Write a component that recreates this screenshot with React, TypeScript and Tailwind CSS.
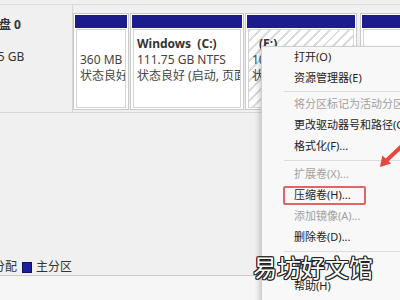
import React from "react";

const font = "font-['Noto_Sans','Noto_Sans_CJK_SC',sans-serif]";

type Item = { label: string; disabled?: boolean; sep?: number; boxed?: boolean };

const items: Item[] = [
  { label: "打开(O)" },
  { label: "资源管理器(E)" },
  { label: "", sep: 5 },
  { label: "将分区标记为活动分区(M)", disabled: true },
  { label: "更改驱动器号和路径(C)..." },
  { label: "格式化(F)..." },
  { label: "", sep: 7 },
  { label: "扩展卷(X)...", disabled: true },
  { label: "压缩卷(H)...", boxed: true },
  { label: "添加镜像(A)...", disabled: true },
  { label: "删除卷(D)..." },
  { label: "", sep: 7 },
  { label: "属性(P)" },
  { label: "帮助(H)" },
];

function Partition({
  width,
  hatched,
  lines,
}: {
  width: string;
  hatched?: boolean;
  lines: React.ReactNode[];
}) {
  return (
    <div className={`${width} shrink-0 h-[97px] flex flex-col bg-white border border-[#c9c9c9] p-[1px]`}>
      <div className="h-[13px] bg-[#1c1c8c] shrink-0" />
      <div
        className={`flex-1 mt-[1px] mx-[1px] border border-[#d4d4d4] overflow-hidden px-[3px] pt-[6px] text-[12px] leading-[16px] text-[#444] whitespace-nowrap ${
          hatched
            ? "bg-[repeating-linear-gradient(135deg,#dcdcdc_0px,#dcdcdc_2px,#ffffff_2px,#ffffff_7px)]"
            : "bg-white"
        }`}
      >
        {lines.map((l, i) => (
          <div key={i} className="h-[16px]">
            {l}
          </div>
        ))}
      </div>
    </div>
  );
}

export default function App() {
  return (
    <div className={`relative w-[400px] h-[300px] overflow-hidden bg-[#f0f0f0] ${font}`}>
      <div className="flex flex-col h-full">
        <div className="h-[5px] shrink-0 border-b border-[#dadada]" />
        {/* disk row */}
        <div className="h-[108px] shrink-0 flex border-b border-[#d6d6d6]">
          <div className="w-[73px] shrink-0 border-r border-[#d6d6d6] pt-[12px] text-[12px] text-[#333] whitespace-nowrap">
            <div className="ml-[-13px] font-bold leading-[16px]">磁盘 0</div>
            <div className="ml-[-33px] mt-[16px] leading-[16px]">232.75 GB</div>
          </div>
          <div className="flex-1 flex pt-[8px] gap-[1px] overflow-hidden">
            <Partition width="w-[56px]" lines={["", "360 MB", "状态良好"]} />
            <Partition
              width="w-[114px]"
              lines={[
                <span className="font-bold text-[#333]">Windows&nbsp;&nbsp;(C:)</span>,
                "111.75 GB NTFS",
                "状态良好 (启动, 页面文件, 故障转储)",
              ]}
            />
            <Partition
              width="w-[112px]"
              hatched
              lines={[
                <span className="pl-[7px] font-bold text-[#333]">(E:)</span>,
                "100.00 GB NTFS",
                "状态良好 (主分区)",
              ]}
            />
            <div className="w-[1px] shrink-0" />
            <Partition width="w-[60px]" lines={["", "", ""]} />
          </div>
        </div>
        <div className="h-[146px] shrink-0" />
        {/* legend */}
        <div className="h-[17px] shrink-0 flex items-center border-b border-[#c9c9c9] text-[12px] text-[#333] whitespace-nowrap">
          <span className="ml-[-19px]">未分配</span>
          <span className="ml-[5px] w-[10px] h-[11px] bg-[#1f1f9e] border border-[#101060]" />
          <span className="ml-[4px]">主分区</span>
        </div>
        <div className="flex-1 bg-[#f6f6f6]" />
      </div>

      {/* context menu */}
      <div className="absolute left-[261px] top-[46px] w-[160px] h-[270px] bg-[#f8f8f8] border-l border-t border-[#cfcfcf] shadow-[-2px_2px_5px_rgba(0,0,0,0.18)]">
        {items.map((it, i) =>
          it.sep ? (
            <div key={i} className="flex items-center pl-[22px]" style={{ height: it.sep }}>
              <div className="h-[1px] flex-1 bg-[#dcdcdc]" />
            </div>
          ) : (
            <div
              key={i}
              className={`relative h-[21px] flex items-center pl-[32px] text-[11px] whitespace-nowrap ${
                it.disabled ? "text-[#a0a0a0]" : "text-[#222]"
              }`}
            >
              {it.boxed && (
                <div className="absolute left-[21px] top-[1px] w-[83px] h-[19px] border-2 border-[#e26464] rounded-[2px]" />
              )}
              {it.label}
            </div>
          )
        )}
      </div>

      {/* red arrow */}
      <svg className="absolute left-[370px] top-[136px]" width="32" height="38" viewBox="0 0 32 38">
        <line x1="34" y1="8" x2="17" y2="24" stroke="#e8473f" strokeWidth="4" strokeLinecap="round" />
        <polygon points="10,31 12.3,19.6 21.1,27.6" fill="#e8473f" />
      </svg>

      {/* watermark */}
      <div className="absolute left-[253px] top-[252px] text-[24px] leading-[30px] text-white font-['Noto_Sans_CJK_SC',sans-serif] [text-shadow:1px_1px_0_#222,-1px_-1px_0_#222,1px_-1px_0_#222,-1px_1px_0_#222,0_1px_0_#222,0_-1px_0_#222,1px_0_0_#222,-1px_0_0_#222]">
        易坊好文馆
      </div>
    </div>
  );
}
